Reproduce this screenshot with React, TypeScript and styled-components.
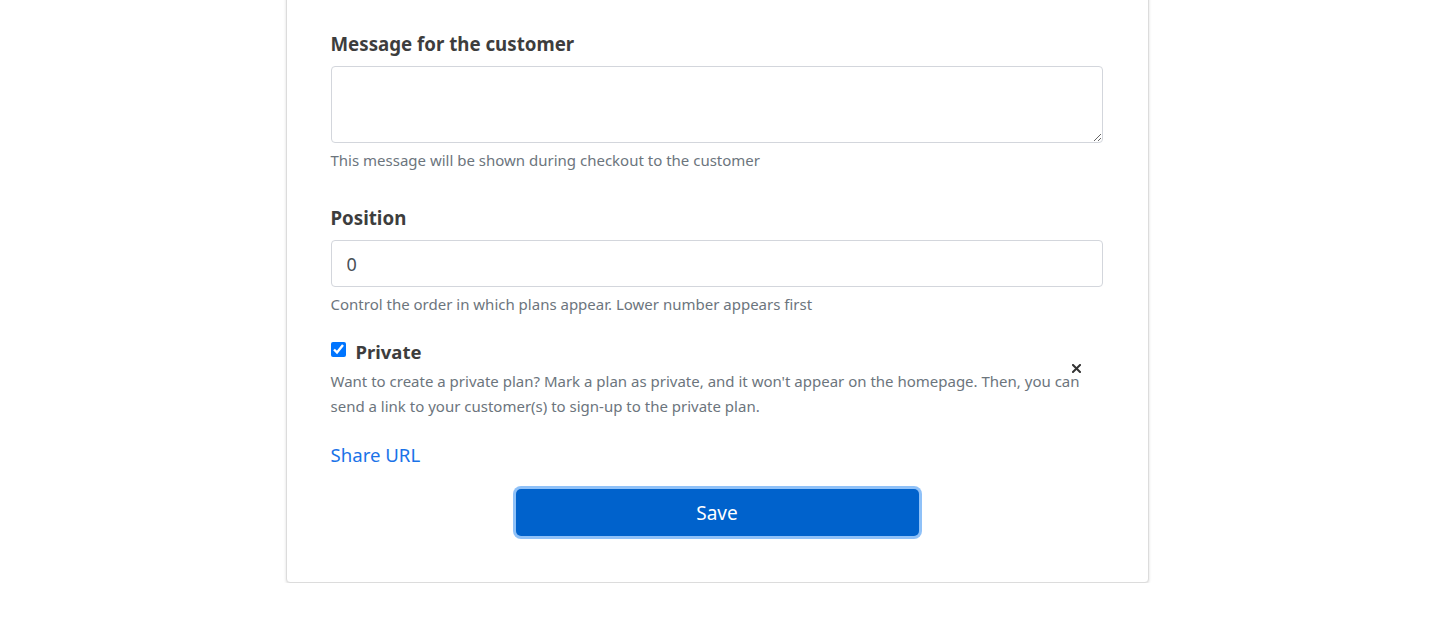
import React from "react";
import styled, { createGlobalStyle } from "styled-components";

const Global = createGlobalStyle`
  html, body { margin: 0; padding: 0; background: #fff; }
  body { font-family: "Noto Sans", "Open Sans", sans-serif; color: #444; }
  * { box-sizing: border-box; }
`;

const Page = styled.div`
  display: flex;
  justify-content: center;
  padding-left: 2px;
`;

const Card = styled.div`
  position: relative;
  width: 863px;
  margin-top: -10px;
  padding: 39px 45px 46px 44px;
  background: #fff;
  border: 1px solid #dcdcdc;
  border-radius: 4px;
  box-shadow: 0 1px 3px rgba(0, 0, 0, 0.14);
  display: flex;
  flex-direction: column;
`;

const Group = styled.div<{ $mb: number }>`
  display: flex;
  flex-direction: column;
  margin-bottom: ${(p) => p.$mb}px;
`;

const Label = styled.label`
  font-size: 18.7px;
  font-weight: 700;
  line-height: 27px;
  color: #3d3d3d;
  margin-bottom: 9px;
`;

const TextArea = styled.textarea`
  height: 77px;
  width: 100%;
  border: 1px solid #d3d6dc;
  border-radius: 4px;
  resize: vertical;
  font: inherit;
  outline: none;
`;

const Input = styled.input`
  height: 47px;
  width: 100%;
  border: 1px solid #d3d6dc;
  border-radius: 4px;
  padding: 0 15px;
  font-family: inherit;
  font-size: 18px;
  color: #495057;
  outline: none;
`;

const Help = styled.div`
  margin-top: 6px;
  font-size: 15px;
  line-height: 22px;
  color: #6c757d;
`;

const CheckRow = styled.div`
  display: flex;
  align-items: flex-start;
  gap: 10px;
`;

const Check = styled.input`
  width: 15px;
  height: 15px;
  margin: 4px 0 0;
  accent-color: #0075ff;
`;

const CheckLabel = styled.label`
  font-size: 18.5px;
  font-weight: 700;
  line-height: 27px;
  color: #3d3d3d;
`;

const Para = styled.p`
  margin: 4px 0 0;
  font-size: 15px;
  line-height: 25px;
  color: #6c757d;
`;

const Close = styled.button`
  position: absolute;
  right: 67px;
  top: 373px;
  width: 9px;
  height: 9px;
  border: none;
  background: none;
  padding: 0;
  display: flex;
  color: #333;
  cursor: pointer;
`;

const ShareLink = styled.a`
  font-size: 18.6px;
  line-height: 28px;
  color: #1a73e8;
  text-decoration: none;
  margin-bottom: 20px;
`;

const SaveButton = styled.button`
  align-self: center;
  width: 403px;
  height: 47px;
  margin-left: 1px;
  border: none;
  border-radius: 5px;
  background: #0062cc;
  box-shadow: 0 0 0 3px #8fc1f8;
  color: #fff;
  font-family: inherit;
  font-size: 19px;
  cursor: pointer;
`;

export default function App() {
  return (
    <>
      <Global />
      <Page>
        <Card>
          <Group $mb={33}>
            <Label>Message for the customer</Label>
            <TextArea />
            <Help>This message will be shown during checkout to the customer</Help>
          </Group>
          <Group $mb={23}>
            <Label>Position</Label>
            <Input defaultValue="0" />
            <Help>Control the order in which plans appear. Lower number appears first</Help>
          </Group>
          <Group $mb={22}>
            <CheckRow>
              <Check type="checkbox" defaultChecked />
              <CheckLabel>Private</CheckLabel>
            </CheckRow>
            <Para>
              Want to create a private plan? Mark a plan as private, and it won't appear on the homepage. Then, you can
              send a link to your customer(s) to sign-up to the private plan.
            </Para>
          </Group>
          <Close aria-label="close">
            <svg width="9" height="9" viewBox="0 0 9 9">
              <path d="M1 1 L8 8 M8 1 L1 8" stroke="currentColor" strokeWidth="2" strokeLinecap="square" />
            </svg>
          </Close>
          <ShareLink href="#">Share URL</ShareLink>
          <SaveButton>Save</SaveButton>
        </Card>
      </Page>
    </>
  );
}
